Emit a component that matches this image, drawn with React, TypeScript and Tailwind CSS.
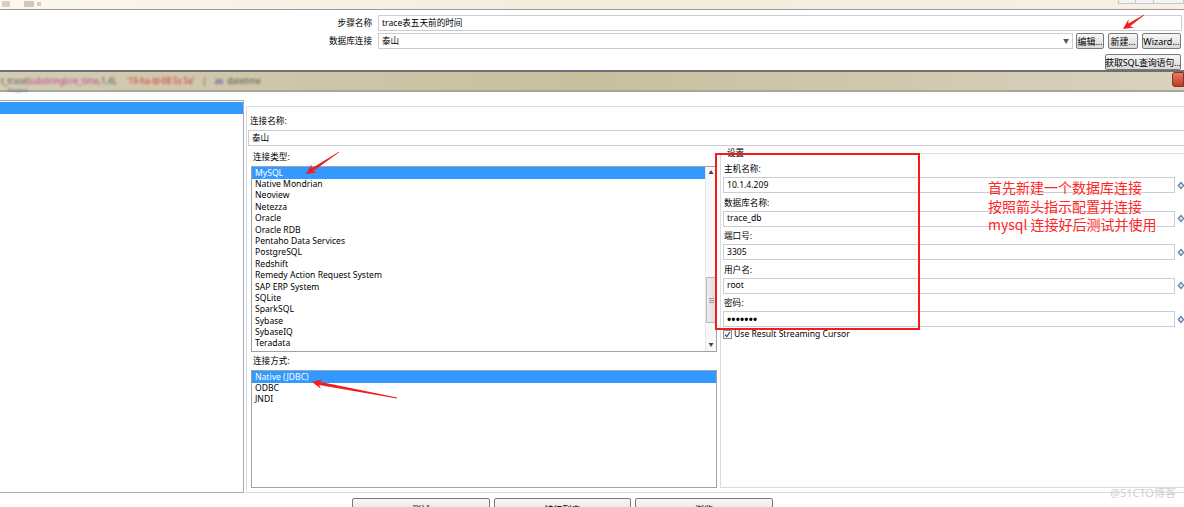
import React from "react";

type P = { children?: React.ReactNode; className?: string };

function Btn({ children, className = "" }: P) {
  return (
    <div
      className={`flex items-center justify-center whitespace-nowrap rounded-[2px] border border-[#7a7a7a] bg-linear-to-b from-[#f7f7f7] to-[#dadada] text-[9px] leading-none text-black ${className}`}
    >
      {children}
    </div>
  );
}

function arrow(tx: number, ty: number, px: number, py: number) {
  const dx = px - tx;
  const dy = py - ty;
  const len = Math.hypot(dx, dy);
  const ux = dx / len;
  const uy = dy / len;
  const nx = -uy;
  const ny = ux;
  const hl = 10;
  const hw = 5;
  const sw = 1.6;
  const tw = 0.4;
  const bx = px - ux * hl;
  const by = py - uy * hl;
  const nbx = px - ux * (hl - 2.5);
  const nby = py - uy * (hl - 2.5);
  const pts = [
    [tx + nx * tw, ty + ny * tw],
    [nbx + nx * sw, nby + ny * sw],
    [bx + nx * hw, by + ny * hw],
    [px, py],
    [bx - nx * hw, by - ny * hw],
    [nbx - nx * sw, nby - ny * sw],
    [tx - nx * tw, ty - ny * tw],
  ];
  return pts.map((p) => p.map((v) => v.toFixed(1)).join(",")).join(" ");
}

function Diamond() {
  return (
    <svg width="8" height="9" viewBox="0 0 8 9" className="shrink-0">
      <path d="M4 0.5 L7.5 4.5 L4 8.5 L0.5 4.5 Z" fill="#5f7fa8" />
      <path d="M4 2.5 L5.8 4.5 L4 6.5 L2.2 4.5 Z" fill="#dfe8f3" />
    </svg>
  );
}

const types = [
  "MySQL",
  "Native Mondrian",
  "Neoview",
  "Netezza",
  "Oracle",
  "Oracle RDB",
  "Pentaho Data Services",
  "PostgreSQL",
  "Redshift",
  "Remedy Action Request System",
  "SAP ERP System",
  "SQLite",
  "SparkSQL",
  "Sybase",
  "SybaseIQ",
  "Teradata",
];

const settings: [string, string][] = [
  ["主机名称:", "10.1.4.209"],
  ["数据库名称:", "trace_db"],
  ["端口号:", "3305"],
  ["用户名:", "root"],
  ["密码:", "•••••••"],
];

export default function App() {
  return (
    <div className="relative h-[507px] w-[1184px] overflow-hidden bg-white font-['Noto_Sans','Noto_Sans_CJK_SC',sans-serif] text-[8.6px] text-black">
      {/* top window strip */}
      <div className="flex h-[10px] items-start border-b border-[#9a9a9a] bg-linear-to-r from-[#fbf8ef] via-[#f2ecda] to-[#f6f1e3]">
        <div className="ml-[2px] mt-[1px] h-[6px] w-[8px] rounded-[1px] bg-[#d6d0c0] blur-[0.6px]" />
        <div className="ml-[14px] mt-[1px] h-[6px] w-[10px] rounded-[1px] bg-[#cfc9b8] blur-[0.6px]" />
        <div className="ml-[3px] mt-[2px] h-[4px] w-[4px] bg-[#d5cfbf] blur-[0.6px]" />
        <div className="ml-auto mr-[0px] flex h-[4px]">
          <div className="w-[18px] border border-t-0 border-[#c8c8c8] bg-[#f4f4f4]" />
          <div className="w-[18px] border border-t-0 border-l-0 border-[#c8c8c8] bg-[#f4f4f4]" />
          <div className="w-[30px] border border-t-0 border-l-0 border-[#c8c8c8] bg-[#f4f4f4]" />
        </div>
      </div>

      {/* top form panel */}
      <div className="h-[60px] bg-white pt-[5px]">
        <div className="flex h-[16px] items-center">
          <div className="w-[372px] text-right">步骤名称</div>
          <div className="ml-[6px] flex h-[16px] w-[804px] items-center border border-[#c9ced6] pl-[3px]">
            trace表五天前的时间
          </div>
        </div>
        <div className="mt-[2px] flex h-[16px] items-center">
          <div className="w-[372px] text-right">数据库连接</div>
          <div className="ml-[6px] flex h-[16px] w-[695px] items-center border border-[#c9ced6] pl-[3px]">
            <span>泰山</span>
            <span className="ml-auto mr-[3px] text-[6px] text-[#555]">▼</span>
          </div>
          <Btn className="ml-[3px] h-[16px] w-[28px]">编辑...</Btn>
          <Btn className="ml-[4px] h-[16px] w-[30px]">新建...</Btn>
          <Btn className="ml-[4px] h-[16px] w-[39px]">Wizard...</Btn>
        </div>
        <div className="mt-[5px] flex h-[16px]">
          <Btn className="ml-[1105px] h-[16px] w-[76px] text-[8.4px] tracking-[-0.2px]">获取SQL查询语句...</Btn>
        </div>
      </div>

      {/* blurred editor strip */}
      <div className="relative h-[22px] border-t-2 border-b-2 border-t-[#6f6f6f] border-b-[#a8a59a] bg-linear-to-r from-[#d4ccb3] via-[#c8bf9f] to-[#d9d2bd]">
        <div className="flex h-[15px] items-end whitespace-nowrap pl-[1px] text-[8px] blur-[0.9px]">
          <span className="text-[#555]">t_trace(</span>
          <span className="text-[#c04090]">substring(cre_time</span>
          <span className="text-[#555]">,1,4), </span>
          <span className="ml-[10px] text-[#d03030]">'19-ha-ld-08 5s 5e'</span>
          <span className="ml-[8px] text-[#555]">|</span>
          <span className="ml-[8px] text-[#3030a0]">as</span>
          <span className="ml-[4px] text-[#555]">datetime</span>
        </div>
        <div className="pl-[8px] text-[6px] leading-none text-[#6070a0] blur-[0.8px]">Project</div>
        <div className="absolute right-0 top-[0px] h-[15px] w-[12px] rounded-l-[3px] border border-[#8a3020] bg-linear-to-b from-[#e87a60] to-[#c0392b]" />
      </div>

      {/* dialog */}
      <div className="flex h-[401px]">
        <div className="mt-[8px] h-[393px] w-[245px] border-t border-r border-b border-[#a8adb3] pt-[1px]">
          <div className="h-[12px] w-[243px] bg-[#3399ff]" />
        </div>
        <div className="ml-[2px] mt-[14px] flex h-[387px] flex-1 flex-col border-l border-t border-b border-[#d6dde3]">
          <div className="mt-[8px] h-[12px] pl-[3px] leading-[12px]">连接名称:</div>
          <div className="ml-[1px] mt-[3px] flex h-[16px] items-center border border-[#c9ced6] pl-[3px]">泰山</div>
          <div className="flex">
            {/* left column */}
            <div className="ml-[4px] w-[466px]">
              <div className="mt-[5px] h-[12px] pl-[2px] leading-[12px]">连接类型:</div>
              <div className="mt-[3px] flex h-[186px] border border-[#9da3aa]">
                <div className="flex-1 pl-[1px]">
                  {types.map((t, i) => (
                    <div
                      key={t}
                      className={
                        i === 0
                          ? "-ml-[1px] h-[12px] whitespace-nowrap bg-[#3399ff] pl-[3px] leading-[12px] text-white"
                          : "h-[11.4px] whitespace-nowrap pl-[2px] leading-[11.4px]"
                      }
                    >
                      {t}
                    </div>
                  ))}
                </div>
                <div className="flex w-[11px] flex-col border-l border-[#e8e8e8] bg-[#f8f8f8]">
                  <div className="flex h-[12px] items-center justify-center text-[5px] text-[#444]">▲</div>
                  <div className="mt-[98px] flex h-[46px] items-center justify-center rounded-[1px] border border-[#b8b8b8] bg-linear-to-r from-[#f0f0f0] to-[#dcdcdc]">
                    <div className="flex flex-col gap-[1px]">
                      <div className="h-px w-[5px] bg-[#999]" />
                      <div className="h-px w-[5px] bg-[#999]" />
                      <div className="h-px w-[5px] bg-[#999]" />
                    </div>
                  </div>
                  <div className="mt-auto flex h-[12px] items-center justify-center text-[5px] text-[#444]">▼</div>
                </div>
              </div>
              <div className="mt-[3px] h-[12px] pl-[2px] leading-[12px]">连接方式:</div>
              <div className="mt-[3px] h-[118px] border border-[#9da3aa]">
                {["Native (JDBC)", "ODBC", "JNDI"].map((t, i) => (
                  <div
                    key={t}
                    className={
                      i === 0
                        ? "h-[12px] bg-[#3399ff] pl-[3px] leading-[12px] text-white"
                        : "h-[11.4px] pl-[3px] leading-[11.4px]"
                    }
                  >
                    {t}
                  </div>
                ))}
              </div>
            </div>
            {/* settings group */}
            <div className="relative ml-[3px] mt-[7px] h-[335px] flex-1 border-l border-t border-b border-[#d6dde3] pt-[7px]">
              <div className="absolute -top-[6px] left-[5px] bg-white px-[1px] leading-[11px]">设置</div>
              {settings.map(([l, v]) => (
                <div key={l} className="h-[33.5px]">
                  <div className="h-[16px] pl-[3px] leading-[16px]">{l}</div>
                  <div className="flex items-center">
                    <div
                      className={`ml-[2px] flex h-[16px] w-[452px] items-center border border-[#c9ced6] pl-[3px] ${
                        v.startsWith("•") ? "text-[11px] font-bold tracking-[0.2px]" : ""
                      }`}
                    >
                      {v}
                    </div>
                    <div className="ml-[2px]">
                      <Diamond />
                    </div>
                  </div>
                </div>
              ))}
              <div className="-mt-[0.5px] flex items-center pl-[2px]">
                <div className="flex h-[9px] w-[9px] items-center justify-center border border-[#8e8f8f] bg-[#f4f4f4]">
                  <svg width="7" height="7" viewBox="0 0 7 7">
                    <path d="M1 3.6 L2.8 5.6 L6 1" stroke="#2a4a7a" strokeWidth="1.2" fill="none" />
                  </svg>
                </div>
                <span className="ml-[2px]">Use Result Streaming Cursor</span>
              </div>
            </div>
          </div>
        </div>
      </div>

      {/* bottom buttons */}
      <div className="mt-[5px] flex gap-[4px] pl-[352px]">
        <Btn className="h-[22px] w-[138px]">测试</Btn>
        <Btn className="h-[22px] w-[137px]">特征列表</Btn>
        <Btn className="h-[22px] w-[138px]">浏览</Btn>
      </div>

      {/* annotations */}
      <div className="absolute left-[715px] top-[153px] h-[177px] w-[205px] border-2 border-[#f21c1c]" />
      <div className="absolute left-[988px] top-[178px] font-['Noto_Sans_CJK_SC',sans-serif] text-[14px] leading-[18.5px] text-[#ff2626]">
        <div>首先新建一个数据库连接</div>
        <div>按照箭头指示配置并连接</div>
        <div>mysql 连接好后测试并使用</div>
      </div>
      <svg className="pointer-events-none absolute left-0 top-0" width="1184" height="507">
        <polygon points={arrow(1144, 15, 1123, 29)} fill="#f01e1e" />
        <polygon points={arrow(339, 152, 306, 174)} fill="#f01e1e" />
        <polygon points={arrow(397, 398, 312, 382)} fill="#f01e1e" />
      </svg>
      <div className="absolute left-[1110px] top-[485px] font-['Noto_Sans','Noto_Sans_CJK_SC',sans-serif] text-[11px] text-[#cfcfcf]">
        @51CTO博客
      </div>
    </div>
  );
}
